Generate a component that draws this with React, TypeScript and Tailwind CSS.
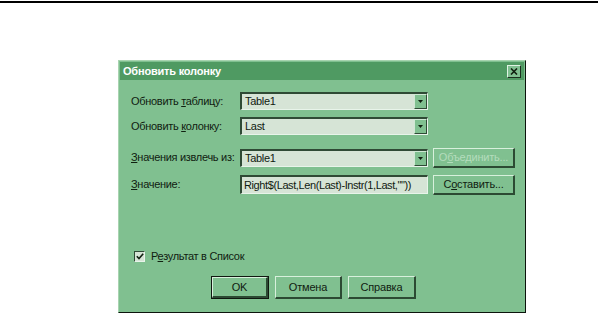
import React from 'react';

const font = { fontFamily: '"Liberation Sans", Arial, sans-serif' };

function Combo({ value }: { value: string }) {
  return (
    <div className="flex h-[18px] w-[188px] shrink-0 items-stretch border-t-2 border-l-2 border-t-[#2f4a35] border-l-[#2f4a35] border-b border-r border-b-[#e8f4ea] border-r-[#e8f4ea] bg-[#d6e4d6]">
      <div className="flex-1 pl-[3px] text-[11px] leading-[15px] text-[#102010]">{value}</div>
      <div className="flex w-[13px] items-center justify-center border-t border-l border-t-[#cfe8d4] border-l-[#cfe8d4] border-b border-r border-b-[#2f4a35] border-r-[#2f4a35] bg-[#80c090]">
        <svg width="5" height="3" viewBox="0 0 5 3">
          <path d="M0 0h5L2.5 3z" fill="#102010" />
        </svg>
      </div>
    </div>
  );
}

function Btn({ children, w, disabled, def }: { children: React.ReactNode; w: string; disabled?: boolean; def?: boolean }) {
  return (
    <div className={`${w} ${def ? 'border border-[#101810]' : ''}`}>
      <div className="flex h-full items-center justify-center border-t border-l border-t-[#d8f0dc] border-l-[#d8f0dc] border-b-2 border-r-2 border-b-[#2c4a33] border-r-[#2c4a33] bg-[#80c090]">
        <span className={`whitespace-nowrap text-[11px] tracking-[-0.2px] ${disabled ? 'text-[#b4dcbc]' : 'text-[#102010]'}`}>{children}</span>
      </div>
    </div>
  );
}

export default function App() {
  return (
    <div className="h-[314px] w-[598px] bg-white" style={font}>
      <div className="mt-px h-[2px] w-full bg-black" />
      <div className="ml-[118px] mt-[57px] flex h-[253px] w-[408px] flex-col border border-[#a8d4b0] border-r-[#0c140c] border-b-[#0c140c] bg-[#80c090]">
        <div className="mx-px mt-px flex h-[18px] items-center justify-between bg-[#4f9a62] pl-[3px] pr-[3px]">
          <span className="text-[11px] font-bold tracking-[-0.2px] text-white">Обновить колонку</span>
          <div className="flex h-[13px] w-[14px] items-center justify-center border-t border-l border-t-[#e0f4e4] border-l-[#e0f4e4] border-b border-r border-b-[#1c301f] border-r-[#1c301f] bg-[#80c090]">
            <svg width="8" height="7" viewBox="0 0 8 7">
              <path d="M1 0.5L7 6.5M7 0.5L1 6.5" stroke="#102010" strokeWidth="1.6" />
            </svg>
          </div>
        </div>

        <div className="flex flex-col pl-[12px] pt-[12px] text-[11px] tracking-[-0.3px] text-[#102010]">
          <div className="flex h-[18px] items-center">
            <span className="w-[109px] whitespace-nowrap">Обновить <u>т</u>аблицу:</span>
            <Combo value="Table1" />
          </div>
          <div className="mt-[7px] flex h-[18px] items-center">
            <span className="w-[109px] whitespace-nowrap">Обновить <u>к</u>олонку:</span>
            <Combo value="Last" />
          </div>
          <div className="mt-[13px] flex h-[19px] items-center">
            <span className="w-[109px] whitespace-nowrap"><u>З</u>начения извлечь из:</span>
            <Combo value="Table1" />
            <div className="ml-[5px] h-[20px]">
              <Btn w="w-[82px] h-[20px]" disabled>О<u>б</u>ъединить...</Btn>
            </div>
          </div>
          <div className="mt-[8px] flex h-[19px] items-center">
            <span className="w-[109px] whitespace-nowrap"><u>З</u>начение:</span>
            <div className="flex h-[19px] w-[188px] shrink-0 items-center whitespace-nowrap border-t-2 border-l-2 border-t-[#2f4a35] border-l-[#2f4a35] border-b border-r border-b-[#e8f4ea] border-r-[#e8f4ea] bg-[#d6e4d6] pl-[2px] text-[11px] tracking-[-0.4px]">
              Right$(Last,Len(Last)-Instr(1,Last,""))
            </div>
            <div className="ml-[5px] h-[20px]">
              <Btn w="w-[82px] h-[20px]">С<u>о</u>ставить...</Btn>
            </div>
          </div>

          <div className="mt-[56px] flex h-[13px] items-center pl-[3px]">
            <div className="flex h-[11px] w-[11px] items-center justify-center border-t border-l border-t-[#2f4a35] border-l-[#2f4a35] border-b border-r border-b-[#e8f4ea] border-r-[#e8f4ea] bg-[#d6e4d6]">
              <svg width="8" height="7" viewBox="0 0 8 7">
                <path d="M0.8 3.2L3 5.5L7.2 0.8" stroke="#102010" strokeWidth="1.6" fill="none" />
              </svg>
            </div>
            <span className="ml-[6px]">Р<u>е</u>зультат в Список</span>
          </div>

          <div className="mt-[13px] flex pl-[80px]">
            <Btn w="w-[58px] h-[23px]" def>OK</Btn>
            <div className="ml-[6px]">
              <Btn w="w-[67px] h-[23px]">Отмена</Btn>
            </div>
            <div className="ml-[6px]">
              <Btn w="w-[68px] h-[23px]">Справка</Btn>
            </div>
          </div>
        </div>
      </div>
    </div>
  );
}
